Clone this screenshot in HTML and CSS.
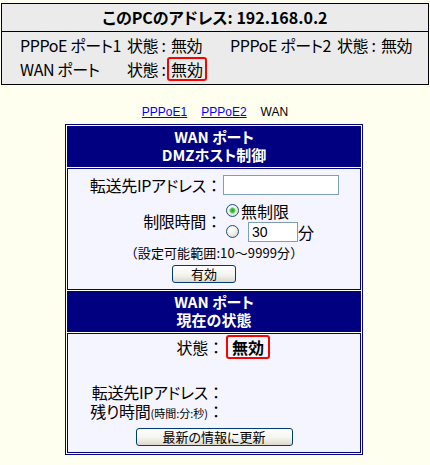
FILE: index.html
```html
<!DOCTYPE html>
<html lang="ja">
<head>
<meta charset="utf-8">
<title>WAN ポート</title>
<link rel="stylesheet" href="styles.css">
</head>
<body>
<div class="status-box">
  <div class="status-title">このPCのアドレス: 192.168.0.2</div>
  <div class="status-grid">
    <span>PPPoE ポート1</span><span>状態 :</span><span class="val">無効</span>
    <span>PPPoE ポート2</span><span>状態 :</span><span class="val">無効</span>
    <span>WAN ポート</span><span>状態 :</span><span><span class="alert">無効</span></span>
  </div>
</div>

<nav class="tabs">
  <a href="#">PPPoE1</a>
  <a href="#">PPPoE2</a>
  <span>WAN</span>
</nav>

<div class="panel">
  <div class="panel-head">WAN ポート<br>DMZホスト制御</div>
  <div class="panel-body dmz">
    <div class="row r-ip">
      <span class="label">転送先IPアドレス<span class="colon">：</span></span>
      <input class="text ip" type="text">
    </div>
    <div class="row r-time">
      <span class="label">制限時間<span class="colon">：</span></span>
      <div class="radios">
        <label class="opt"><input class="radio" type="radio" name="t" checked>無制限</label>
        <label class="opt"><input class="radio" type="radio" name="t"><input class="text min" type="text" value="30">分</label>
      </div>
    </div>
    <div class="note"><span class="paren">（</span>設定可能範囲:10～9999分<span class="paren">）</span></div>
    <button class="btn btn-ok" type="button">有効</button>
  </div>
  <div class="panel-head">WAN ポート<br>現在の状態</div>
  <div class="panel-body now">
    <div class="row r-state">
      <span class="label">状態<span class="colon">：</span></span>
      <span class="alert bold">無効</span>
    </div>
    <div class="row r-blank"></div>
    <div class="row r-line">
      <span class="label">転送先IPアドレス<span class="colon">：</span></span>
    </div>
    <div class="row r-line">
      <span class="label">残り時間<small>(時間:分:秒)</small><span class="colon">：</span></span>
    </div>
    <button class="btn btn-refresh" type="button">最新の情報に更新</button>
  </div>
</div>
</body>
</html>
```

FILE: styles.css
```css
* { box-sizing: border-box; }

body {
  margin: 0;
  background: #fffff0;
  color: #000;
  font-family: "Noto Sans CJK JP", "Liberation Sans", sans-serif;
  font-feature-settings: "palt";
  font-size: 16px;
}

/* top status box */
.status-box {
  margin: 3px 1px 0;
  border: 1px solid #000;
  background: #ebebeb;
}
.status-title {
  height: 28px;
  line-height: 27px;
  text-align: center;
  font-weight: bold;
  border-bottom: 1px solid #000;
}
.status-grid {
  display: grid;
  grid-template-columns: 107px 40px 63px 107px 40px auto;
  grid-template-rows: 20px 24px;
  row-gap: 2px;
  align-items: center;
  padding: 3px 0 3px 18px;
  line-height: 20px;
  white-space: nowrap;
  letter-spacing: -0.4px;
}
.val { padding-left: 4px; }
.alert {
  display: inline-block;
  border: 2px solid #f00;
  border-radius: 3px;
  padding: 0 2px;
  line-height: 20px;
  letter-spacing: 0;
}
.alert.bold {
  font-weight: bold;
  padding: 0 4px;
}

/* tabs */
.tabs {
  display: flex;
  justify-content: center;
  gap: 14px;
  margin: 19px 0 4px;
  font-family: "Liberation Sans", sans-serif;
  font-size: 12px;
  line-height: 16px;
}
.tabs a { color: #0000ff; text-decoration: underline; }

/* panel */
.panel {
  width: 298px;
  margin-left: 65px;
  border: 1px solid #000080;
  padding: 1px;
  display: flex;
  flex-direction: column;
  gap: 1px;
}
.panel-head {
  background: #000080;
  color: #fff;
  font-weight: bold;
  font-size: 15px;
  line-height: 18px;
  text-align: center;
  padding: 2px 0 3px;
}
.panel-body {
  background: #f5f5ff;
  border: 1px solid #000080;
  display: flex;
  flex-direction: column;
}
.row {
  display: flex;
  align-items: center;
  white-space: nowrap;
  line-height: 20px;
}
.label {
  flex: none;
  width: 154px;
  text-align: right;
  letter-spacing: -0.3px;
}
.colon { font-feature-settings: normal; letter-spacing: 0; }
.label small { font-size: 11px; letter-spacing: 0; }

.dmz { padding: 5px 0 6px; }
.r-ip { height: 22px; }
.text {
  height: 20px;
  border: 1px solid #7f9db9;
  background: #fff;
  font-family: "Liberation Sans", sans-serif;
  font-size: 14px;
  padding: 0 3px;
  margin: 0;
}
.ip { width: 116px; margin-left: 1px; }
.r-time { margin-top: 4px; }
.radios {
  display: flex;
  flex-direction: column;
  margin-left: 4px;
}
.opt {
  display: flex;
  align-items: center;
  height: 21px;
}
.radio {
  appearance: none;
  -webkit-appearance: none;
  width: 13px;
  height: 13px;
  margin: 0 2px 0 0;
  border: 1px solid #1c5180;
  border-radius: 50%;
  background: radial-gradient(circle at 40% 35%, #ffffff 0, #f0f0ea 45%, #cfcfc6 100%);
}
.radio:checked {
  background:
    radial-gradient(circle at 50% 50%, #21a121 0, #4cc24c 2px, #a6dea6 3px, transparent 3.6px),
    radial-gradient(circle at 40% 35%, #ffffff 0, #f0f0ea 45%, #cfcfc6 100%);
}
.min { width: 50px; margin-left: 7px; margin-top: 1px; }
.note {
  text-align: center;
  font-size: 13px;
  line-height: 21px;
  letter-spacing: 0.1px;
}
.paren {
  display: inline-block;
  width: 13px;
  text-align: center;
  font-feature-settings: normal;
}
.btn {
  font-family: "Noto Sans CJK JP", sans-serif;
  font-feature-settings: "palt";
  font-size: 13px;
  line-height: 16px;
  height: 18px;
  padding: 0;
  border: 1px solid #003c74;
  border-radius: 3px;
  background: linear-gradient(#ffffff, #f4f4f0 55%, #dcd8cc);
  color: #000;
}
.btn-ok { width: 64px; margin: 2px 0 0 104px; }

.now { padding: 1px 0 6px; }
.r-state { height: 24px; }
.now .label { width: 156px; margin-right: 2px; }
.r-blank { height: 23px; }
.r-line { height: 20px; }
.btn-refresh { width: 157px; margin: 6px auto 0; }
```
